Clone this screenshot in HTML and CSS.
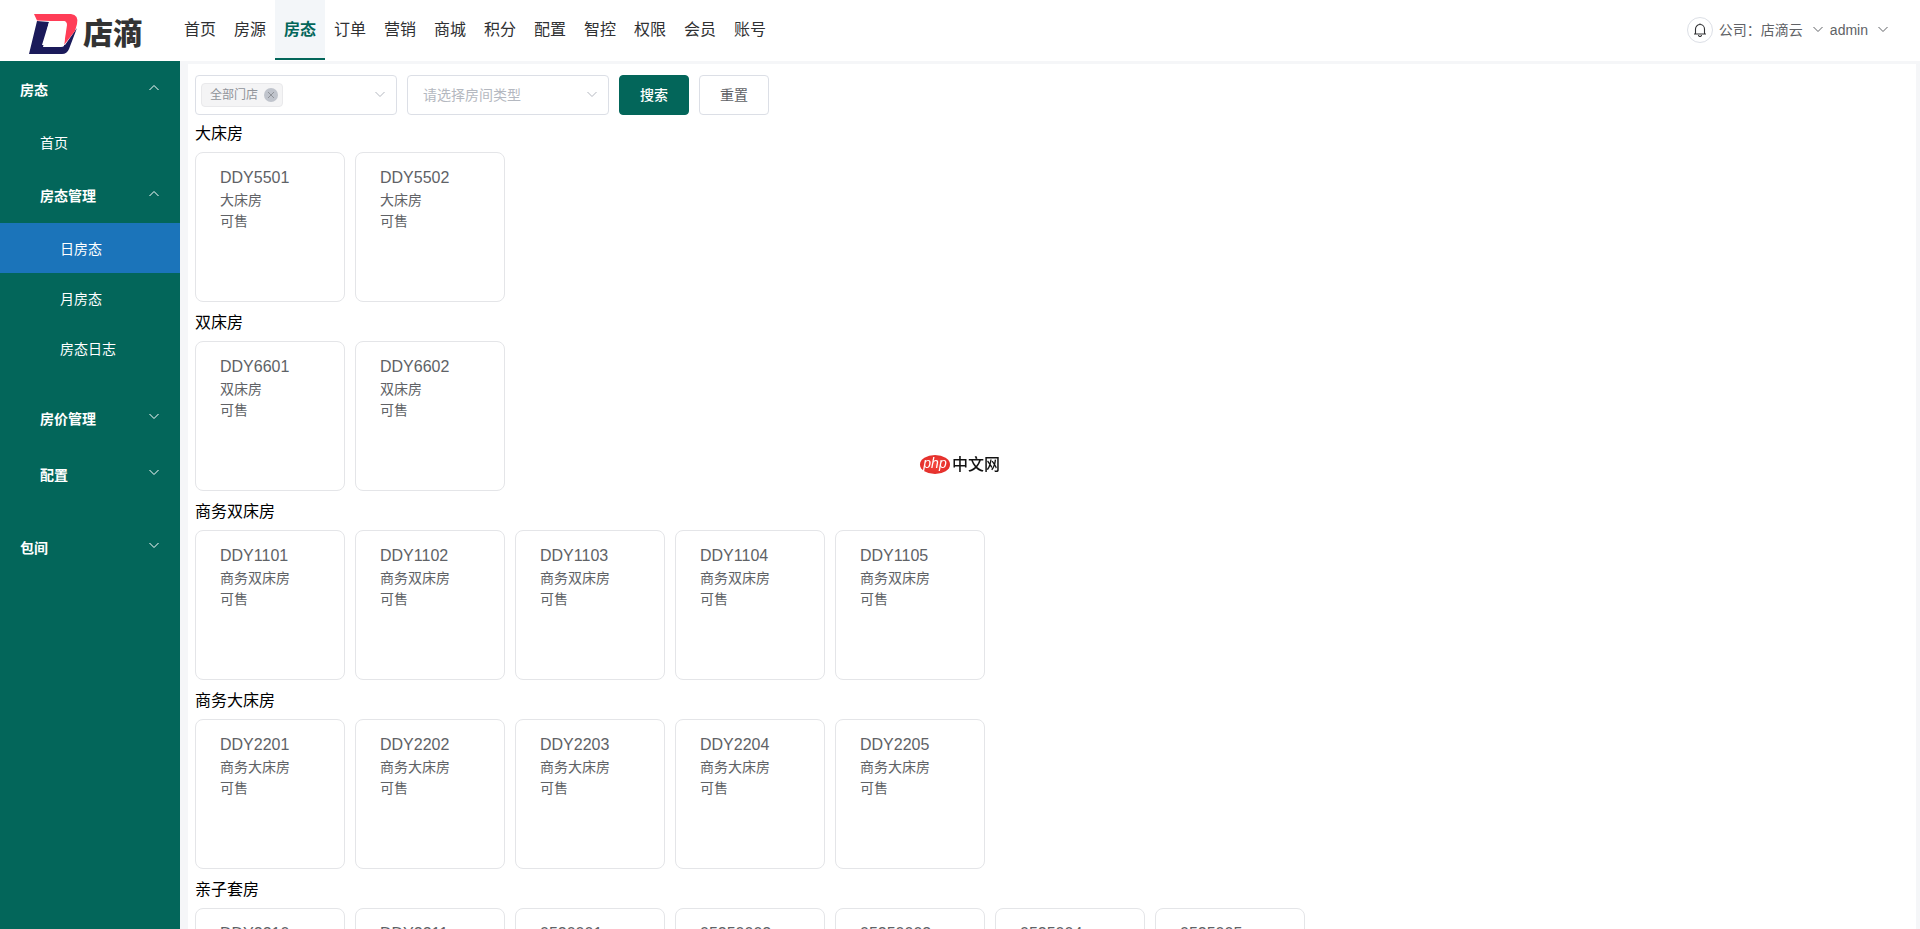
FILE: index.html
```html
<!DOCTYPE html>
<html lang="zh-CN">
<head>
<meta charset="utf-8">
<title>日房态</title>
<link rel="stylesheet" href="styles.css">
</head>
<body>
<svg class="sprite" aria-hidden="true">
  <symbol id="down" viewBox="0 0 12 8"><path d="M1.500 1 6 5.500 10.500 1" fill="none" stroke="currentColor" stroke-width="1"/></symbol>
  <symbol id="up" viewBox="0 0 12 8"><path d="M1.500 6 6 1.500 10.500 6" fill="none" stroke="currentColor" stroke-width="1"/></symbol>
</svg>
<header class="header">
  <a class="logo" href="#" aria-label="店滴">
    <svg class="logo-mark" viewBox="0 0 50 42" aria-hidden="true">
      <path d="M8 8 20 9 13 32H36L48 15 40 36Q38 41 33 41H0Z" fill="#1b1a5a"/>
      <path d="M5 1H42Q50 2 48 11L46 18 35 32 38 12Q38 8 34 8H22L8 7.500Z" fill="#ff3d57"/>
      <path d="M20 9 34 8Q38 8 37 12L35 33Q34 34 32 34H14Z" fill="#fff"/>
    </svg>
    <span class="logo-text">店滴</span>
  </a>
  <nav class="nav">
    <a href="#">首页</a><a href="#">房源</a><a href="#" class="active">房态</a><a href="#">订单</a><a href="#">营销</a><a href="#">商城</a><a href="#">积分</a><a href="#">配置</a><a href="#">智控</a><a href="#">权限</a><a href="#">会员</a><a href="#">账号</a>
  </nav>
  <div class="account">
    <button class="bell" aria-label="通知">
      <svg viewBox="0 0 14 14" width="14" height="14" fill="none" stroke="currentColor" stroke-width="1.1"><path d="M1 11H13M2.500 11V6A4.500 4.500 0 0 1 11.500 6V11M7 1.500V.5M5.500 12A1.500 1.500 0 0 0 8.500 12"/></svg>
    </button>
    <button class="drop">公司：店滴云<svg class="arrow"><use href="#down"/></svg></button>
    <button class="drop">admin<svg class="arrow"><use href="#down"/></svg></button>
  </div>
</header>
<div class="body">
  <aside class="sidebar">
    <section class="group">
      <button class="title">房态<svg class="arrow"><use href="#up"/></svg></button>
      <a class="item" href="#">首页</a>
      <section class="group sub">
        <button class="title">房态管理<svg class="arrow"><use href="#up"/></svg></button>
        <a class="item active" href="#">日房态</a>
        <a class="item" href="#">月房态</a>
        <a class="item" href="#">房态日志</a>
      </section>
      <section class="group sub closed"><button class="title">房价管理<svg class="arrow"><use href="#down"/></svg></button></section>
      <section class="group sub closed"><button class="title">配置<svg class="arrow"><use href="#down"/></svg></button></section>
    </section>
    <section class="group"><button class="title">包间<svg class="arrow"><use href="#down"/></svg></button></section>
  </aside>
  <main class="main">
    <form class="filters">
      <div class="field">
        <span class="tag">全部门店<button type="button" class="tag-close" aria-label="移除"><svg viewBox="0 0 14 14"><path d="m4 4 6 6M10 4 4 10" stroke="currentColor" fill="none"/></svg></button></span>
        <input class="field-input" type="text" aria-label="门店">
        <svg class="arrow"><use href="#down"/></svg>
      </div>
      <div class="field">
        <select class="field-select" aria-label="房间类型"><option>请选择房间类型</option></select>
        <svg class="arrow"><use href="#down"/></svg>
      </div>
      <button type="button" class="btn primary">搜索</button>
      <button type="button" class="btn">重置</button>
    </form>
    <section>
      <h2 class="type">大床房</h2>
      <div class="rooms">
        <article class="room"><h3>DDY5501</h3><p>大床房</p><p>可售</p></article>
        <article class="room"><h3>DDY5502</h3><p>大床房</p><p>可售</p></article>
      </div>
    </section>
    <section>
      <h2 class="type">双床房</h2>
      <div class="rooms">
        <article class="room"><h3>DDY6601</h3><p>双床房</p><p>可售</p></article>
        <article class="room"><h3>DDY6602</h3><p>双床房</p><p>可售</p></article>
      </div>
    </section>
    <section>
      <h2 class="type">商务双床房</h2>
      <div class="rooms">
        <article class="room"><h3>DDY1101</h3><p>商务双床房</p><p>可售</p></article>
        <article class="room"><h3>DDY1102</h3><p>商务双床房</p><p>可售</p></article>
        <article class="room"><h3>DDY1103</h3><p>商务双床房</p><p>可售</p></article>
        <article class="room"><h3>DDY1104</h3><p>商务双床房</p><p>可售</p></article>
        <article class="room"><h3>DDY1105</h3><p>商务双床房</p><p>可售</p></article>
      </div>
    </section>
    <section>
      <h2 class="type">商务大床房</h2>
      <div class="rooms">
        <article class="room"><h3>DDY2201</h3><p>商务大床房</p><p>可售</p></article>
        <article class="room"><h3>DDY2202</h3><p>商务大床房</p><p>可售</p></article>
        <article class="room"><h3>DDY2203</h3><p>商务大床房</p><p>可售</p></article>
        <article class="room"><h3>DDY2204</h3><p>商务大床房</p><p>可售</p></article>
        <article class="room"><h3>DDY2205</h3><p>商务大床房</p><p>可售</p></article>
      </div>
    </section>
    <section>
      <h2 class="type">亲子套房</h2>
      <div class="rooms">
        <article class="room"><h3>DDY2210</h3></article>
        <article class="room"><h3>DDY2211</h3></article>
        <article class="room"><h3>0520001</h3></article>
        <article class="room"><h3>05250002</h3></article>
        <article class="room"><h3>05250003</h3></article>
        <article class="room"><h3>0525004</h3></article>
        <article class="room"><h3>0525005</h3></article>
      </div>
    </section>
  </main>
</div>
<div class="watermark"><span class="php">php</span><span>中文网</span></div>
</body>
</html>
```

FILE: styles.css
```css
* { box-sizing: border-box; }
body {
  margin: 0;
  height: 100vh;
  display: flex;
  flex-direction: column;
  overflow: hidden;
  background: #f5f6f8;
  color: #606266;
  font: 14px/20px "Liberation Sans", "Noto Sans CJK SC", sans-serif;
}
a { color: inherit; text-decoration: none; }
button, input, select { font: inherit; color: inherit; border: 0; padding: 0; background: none; }
button { cursor: pointer; }
h2, h3, p { margin: 0; font-weight: 400; }
.sprite { display: none; }
.arrow { width: 12px; height: 8px; flex: none; }

.header { display: flex; flex: none; height: 61px; background: #fff; }
.logo { display: flex; align-items: center; width: 175px; padding: 6px 0 0 29px; }
.logo-mark { width: 50px; height: 42px; }
.logo-text {
  margin-left: 4px;
  color: #333;
  font-size: 30px;
  font-weight: 900;
  line-height: 40px;
}
.nav { display: flex; height: 60px; }
.nav a {
  width: 50px;
  padding-top: 20px;
  border-bottom: 2px solid transparent;
  color: #303133;
  font-size: 16px;
  text-align: center;
}
.nav .active { background: #f3f6f9; border-color: #03665a; color: #03665a; font-weight: 700; }
.account { display: flex; align-items: center; gap: 6px; height: 60px; margin-left: auto; padding-right: 31px; }
.bell {
  display: grid;
  place-items: center;
  width: 26px;
  height: 26px;
  border: 1px solid #dcdfe6;
  border-radius: 50%;
  color: #303133;
}
.drop { display: flex; align-items: center; gap: 9px; }

.body { display: flex; flex: 1; min-height: 0; }
.sidebar { flex: none; width: 180px; background: #03665a; color: #fff; }
.group { padding-bottom: 17px; }
.sub.closed { padding-bottom: 0; }
.title {
  display: flex;
  align-items: center;
  justify-content: space-between;
  width: 100%;
  height: 56px;
  padding: 2px 20px 0;
  font-weight: 700;
}
.title .arrow { margin-bottom: 4px; }
.item { display: flex; align-items: center; height: 50px; padding: 2px 0 0 40px; }
.sub .title { padding-left: 40px; }
.sub .item { padding-left: 60px; }
.item.active { background: #1b74ba; }

.main {
  flex: 1;
  min-width: 0;
  margin: 3px 4px 0 8px;
  padding: 11px 7px 0;
  overflow-y: auto;
  scrollbar-width: none;
  background: #fff;
}
.filters { display: flex; gap: 10px; }
.field {
  position: relative;
  display: flex;
  align-items: center;
  width: 202px;
  height: 40px;
  padding: 0 10px 0 5px;
  border: 1px solid #dcdfe6;
  border-radius: 4px;
  color: #b4b8c0;
}
.field-input { flex: 1; min-width: 0; outline: 0; }
.field-select { flex: 1; padding-left: 10px; appearance: none; outline: 0; }
.tag {
  display: flex;
  align-items: center;
  gap: 6px;
  height: 24px;
  padding: 0 4px 0 8px;
  border: 1px solid #e9e9eb;
  border-radius: 4px;
  background: #f4f4f5;
  color: #909399;
  font-size: 12px;
}
.tag-close { width: 14px; height: 14px; border-radius: 50%; background: #c0c4cc; }
.tag-close svg { display: block; }
.btn { width: 70px; height: 40px; border: 1px solid #dcdfe6; border-radius: 4px; }
.btn.primary { background: #03665a; border-color: #03665a; color: #fff; font-weight: 500; }

.type { padding: 7px 0 6px; color: #000; font-size: 16px; line-height: 24px; }
.rooms { display: flex; flex-wrap: wrap; gap: 10px; padding-bottom: 2px; }
.room {
  width: 150px;
  height: 150px;
  padding: 14px 24px;
  border: 1px solid #e4e5e8;
  border-radius: 8px;
  line-height: 21px;
}
.room h3 { margin-bottom: 1px; font-size: 16px; line-height: 22px; }

.watermark {
  position: absolute;
  top: 50%;
  left: 50%;
  transform: translate(-50%, -50%);
  display: flex;
  align-items: center;
  gap: 2px;
  color: #111;
  font-size: 16px;
  font-weight: 500;
}
.php {
  width: 30px;
  height: 19px;
  border-radius: 50%;
  background: radial-gradient(#f5473f, #dc2422);
  color: #fff;
  font-size: 14px;
  font-style: italic;
  line-height: 17px;
  text-align: center;
}
```
